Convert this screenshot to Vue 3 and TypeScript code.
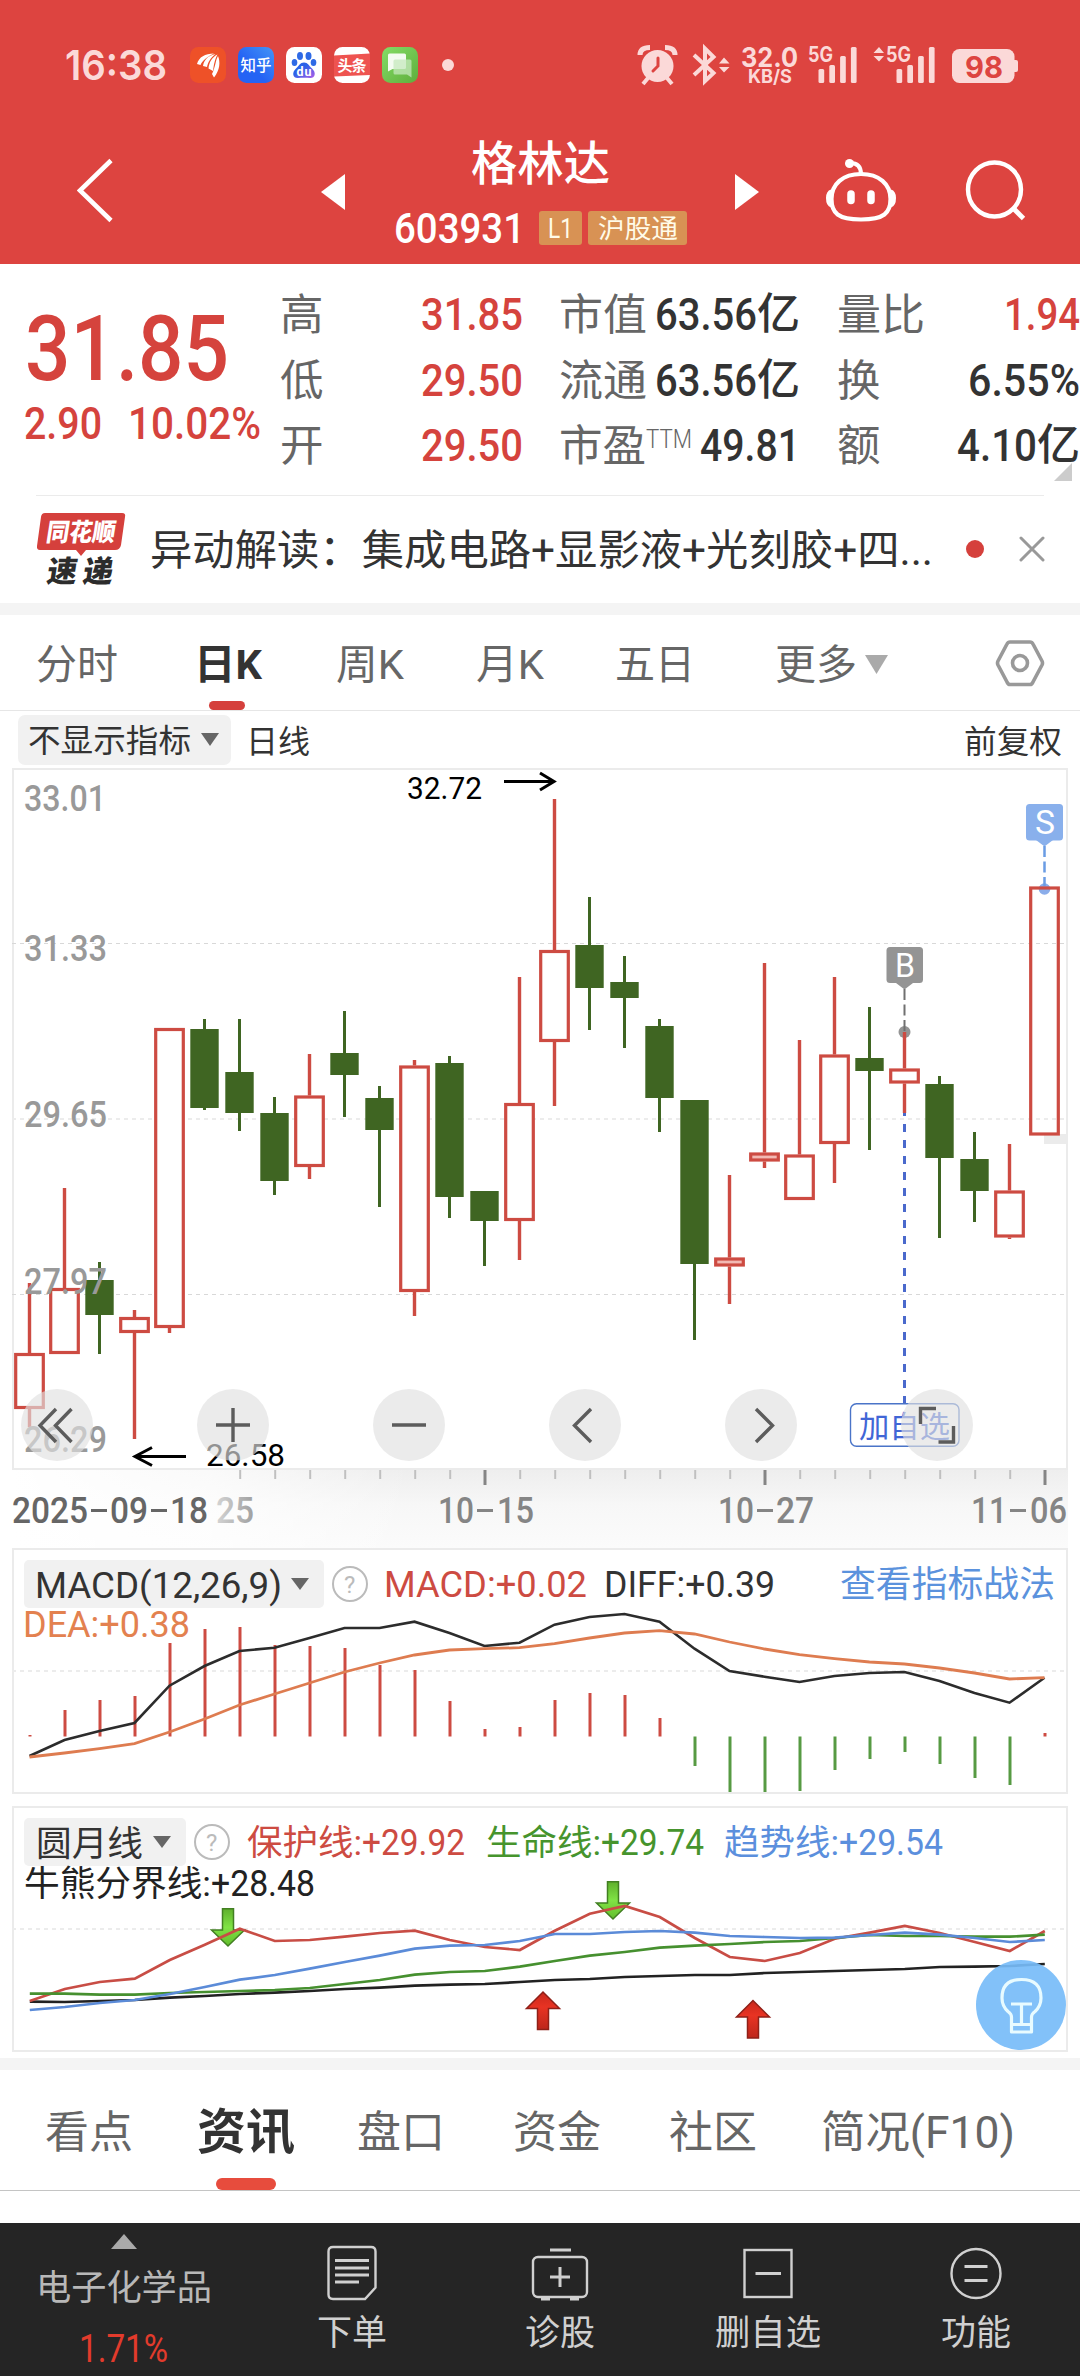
<script setup lang="ts">
import { h, type FunctionalComponent } from 'vue'

interface FitProps { t: string; w: number; s: number; b?: number }

// One line of text set to an exact advance width; colour is inherited.
const Fit: FunctionalComponent<FitProps> = (p) =>
  h('svg', { width: p.w, height: p.s, style: 'display:block;overflow:visible;flex:none' }, [
    h('text', {
      x: 0, y: p.s * 0.865, 'font-size': p.s, 'font-weight': p.b ?? 400,
      textLength: p.w, lengthAdjust: 'spacingAndGlyphs', fill: 'currentColor',
    }, p.t),
  ])
Fit.props = ['t', 'w', 's', 'b']

const RED = '#cd4b42'
const GREEN = '#3f6522'

interface Candle { up: boolean; hi: number; top: number; bot: number; lo: number }
const raw: [number, number, number, number, number][] = [
  [1, 1283, 1353, 1409, 1427], [1, 1188, 1288, 1354, 1354], [0, 1262, 1280, 1315, 1354],
  [1, 1310, 1317, 1333, 1439], [1, 1028, 1028, 1328, 1333], [0, 1019, 1029, 1108, 1110],
  [0, 1019, 1072, 1113, 1131], [0, 1097, 1113, 1181, 1195], [1, 1054, 1095.5, 1167, 1179],
  [0, 1011, 1053, 1075, 1117], [0, 1086, 1098, 1130, 1207], [1, 1060, 1065.5, 1292, 1316],
  [0, 1056, 1063, 1197, 1218], [0, 1191, 1191, 1221, 1266], [1, 977, 1103, 1221, 1260],
  [1, 799, 950, 1042, 1106], [0, 897, 945, 988, 1030], [0, 956, 982, 998, 1048],
  [0, 1019, 1026, 1098, 1132], [0, 1100, 1100, 1264, 1340], [1, 1175, 1257.5, 1266.5, 1304],
  [1, 963, 1152.5, 1161.5, 1168], [1, 1040, 1154.5, 1200, 1200], [1, 977, 1054.5, 1144, 1183],
  [0, 1007, 1058, 1071, 1150], [1, 1032, 1068.5, 1083.5, 1113], [0, 1076, 1084, 1158, 1238],
  [0, 1132, 1159, 1191, 1222], [1, 1144, 1190.5, 1237.5, 1239], [1, 886.5, 886.5, 1135.5, 1135.5],
]
const candles: Candle[] = raw.map(([u, hi, top, bot, lo]) => ({ up: u === 1, hi, top, bot, lo }))
const cx = (i: number): number => 29.5 + i * 35

const points = (ys: number[], dx = 0): string => ys.map((y, i) => `${cx(i) + dx},${y}`).join(' ')

const bars = [1735, 1710, 1700, 1696, 1643, 1629, 1627, 1645, 1646, 1648, 1665, 1670, 1701, 1729, 1727, 1700, 1693, 1695, 1718,
  1766, 1792, 1792, 1791, 1770, 1759, 1752, 1764, 1778, 1785, 1733]
const diff = [1756, 1740, 1731, 1723, 1685.7, 1666, 1651, 1647.7, 1638, 1628, 1628, 1621.7, 1633, 1646, 1642.7, 1624.7, 1617, 1614,
  1621.7, 1648.7, 1671, 1676.7, 1682, 1676, 1673, 1672, 1681, 1693, 1702.7, 1677.7]
const dea = [1757, 1753, 1748.7, 1743.7, 1732, 1719, 1705, 1694, 1683, 1672, 1663, 1655, 1650, 1648.7, 1647.7, 1643.7, 1638, 1633,
  1630.7, 1634, 1642, 1649, 1654.7, 1658.7, 1662, 1664, 1668, 1673, 1679, 1677.7]
const protect = [2001, 1989, 1982, 1978.7, 1960, 1944.7, 1928.7, 1941, 1940, 1936.7, 1933, 1930.7, 1940, 1947, 1950, 1930.7, 1913.7,
  1906, 1917, 1938, 1957, 1961, 1953, 1938.7, 1932.7, 1926, 1933, 1942, 1951, 1931]
const trend = [2010, 2007, 2003, 2000, 1994, 1987, 1979.7, 1975, 1968.7, 1962, 1955.7, 1948.7, 1945.7, 1945, 1941, 1934, 1934, 1932,
  1931, 1932.7, 1936, 1937, 1938, 1937.7, 1935, 1932.7, 1934.7, 1938, 1942, 1940]
const life = [1993.7, 1993.7, 1994.7, 1994.7, 1993, 1992, 1991, 1990, 1988, 1984, 1980, 1974.7, 1972, 1971, 1966.7, 1961, 1955.7,
  1952, 1947.7, 1945.7, 1944, 1942, 1941, 1938, 1935, 1936, 1936, 1936.7, 1936.7, 1934.7]
const divide = [2001.7, 2002, 2001, 2000, 1997.7, 1996, 1994, 1992.7, 1991, 1989, 1987.7, 1985.7, 1984.7, 1984, 1982, 1980, 1979,
  1977, 1976, 1975, 1975, 1973, 1972, 1971, 1970, 1969, 1967, 1966.7, 1966, 1964]

interface Label { t: string; x: number; y: number; w: number; s: number; c: string; b?: number }
const axis: Label[] = [
  { t: '33.01', x: 24, y: 811, w: 82, s: 36, c: '#999', b: 500 },
  { t: '31.33', x: 24, y: 961, w: 83, s: 36, c: '#999', b: 500 },
  { t: '29.65', x: 24, y: 1127, w: 83, s: 36, c: '#999', b: 500 },
  { t: '27.97', x: 24, y: 1294, w: 83, s: 36, c: '#999', b: 500 },
  { t: '26.29', x: 24, y: 1452, w: 83, s: 36, c: '#999', b: 500 },
  { t: '32.72', x: 407, y: 799, w: 75, s: 30.5, c: '#000' },
  { t: '26.58', x: 206, y: 1466, w: 79, s: 30.5, c: '#000' },
]
const dates: Label[] = [
  { t: '2025', x: 12, y: 1523, w: 76, s: 36, c: '#666', b: 500 },
  { t: '09', x: 110, y: 1523, w: 38, s: 36, c: '#666', b: 500 },
  { t: '18', x: 170, y: 1523, w: 38, s: 36, c: '#666', b: 500 },
  { t: '25', x: 216, y: 1523, w: 38, s: 36, c: 'url(#fade25)', b: 500 },
  { t: '10', x: 438, y: 1523, w: 36, s: 36, c: '#858585', b: 500 },
  { t: '15', x: 497, y: 1523, w: 37, s: 36, c: '#858585', b: 500 },
  { t: '10', x: 718, y: 1523, w: 36, s: 36, c: '#858585', b: 500 },
  { t: '27', x: 776, y: 1523, w: 38, s: 36, c: '#858585', b: 500 },
  { t: '11', x: 971, y: 1523, w: 36, s: 36, c: '#858585', b: 500 },
  { t: '06', x: 1030, y: 1523, w: 37, s: 36, c: '#858585', b: 500 },
]
const dashes: [number, string][] = [[91, '#666'], [151, '#666'], [477, '#858585'], [757, '#858585'], [1010, '#858585']]
const macdText: Label[] = [
  { t: 'MACD(12,26,9)', x: 35, y: 1598, w: 247, s: 36, c: '#333' },
  { t: 'MACD:+0.02', x: 384, y: 1597, w: 203, s: 36, c: RED },
  { t: 'DIFF:+0.39', x: 604, y: 1597, w: 171, s: 36, c: '#333' },
  { t: '查看指标战法', x: 840, y: 1597, w: 215, s: 36, c: '#5b92dd' },
  { t: 'DEA:+0.38', x: 23, y: 1637, w: 167, s: 36, c: '#e3814f' },
]
const moonText: Label[] = [
  { t: '圆月线', x: 36, y: 1856, w: 107, s: 35.5, c: '#333' },
  { t: '保护线:', x: 247, y: 1855, w: 115, s: 35.5, c: RED },
  { t: '+29.92', x: 362, y: 1855, w: 103, s: 36, c: RED },
  { t: '生命线:', x: 486, y: 1855, w: 115, s: 35.5, c: '#46942d' },
  { t: '+29.74', x: 601, y: 1855, w: 103, s: 36, c: '#46942d' },
  { t: '趋势线:', x: 724, y: 1855, w: 115, s: 35.5, c: '#5b8fdd' },
  { t: '+29.54', x: 839, y: 1855, w: 104, s: 36, c: '#5b8fdd' },
  { t: '牛熊分界线:', x: 24, y: 1896, w: 187, s: 35.5, c: '#222' },
  { t: '+28.48', x: 211, y: 1896, w: 104, s: 36, c: '#222' },
]
const signalTops = [69, 65, 56, 47]
</script>

<template>
  <div class="app">
    <header class="top">
      <div class="status">
        <Fit class="clock" t="16:38" :w="102" :s="41" :b="600" />
        <div class="apps">
          <svg width="36" height="36" viewBox="0 0 36 36">
            <rect width="36" height="36" rx="8.5" fill="#ee5128" />
            <path d="M7 17C9 10 15 6.500 24 6.500C17 9.500 12 14 10.500 18ZM13 19C14 13 18 8.500 25.500 7C20.500 11 18 15 17 20ZM18.500 21.500C19 15.500 22 10 27.500 7.500C24.500 13 24 17.500 23 24ZM22 27C25.500 20 25.500 13 28 9C30.500 15 30 23 24 30.500Z" fill="#fff" />
          </svg>
          <svg width="36" height="36" viewBox="0 0 36 36">
            <defs><linearGradient id="zh" x1="0" y1="1" x2="1" y2="0"><stop offset=".4" stop-color="#2563f4" /><stop offset="1" stop-color="#4395f6" /></linearGradient></defs>
            <rect width="36" height="36" rx="8.500" fill="url(#zh)" />
            <text x="2.500" y="23.500" font-size="15.500" textLength="31" fill="#fff" font-weight="500">知乎</text>
          </svg>
          <svg width="36" height="36" viewBox="0 0 36 36">
            <defs><linearGradient id="du" x1="0" y1="0" x2="1" y2="1"><stop offset=".4" stop-color="#2b62e8" /><stop offset="1" stop-color="#b05ee8" /></linearGradient></defs>
            <rect width="36" height="36" rx="8.500" fill="#fff" />
            <g fill="#2e6ae6">
              <ellipse cx="14" cy="9" rx="3" ry="4" /><ellipse cx="22.500" cy="9" rx="3" ry="4" />
              <ellipse cx="8.500" cy="15.500" rx="2.800" ry="3.600" /><ellipse cx="27.500" cy="15.500" rx="2.800" ry="3.600" />
            </g>
            <path d="M18 15.500C22 15.500 23 19 26 21.500C31 26 28.500 31.500 24 31C20 30.500 16 30.500 12 31C7.500 31.500 5 26 10 21.500C13 19 14 15.500 18 15.500Z" fill="url(#du)" />
            <text x="10.500" y="29" font-size="12.500" textLength="15" font-weight="700" fill="#fff">du</text>
          </svg>
          <svg width="36" height="36" viewBox="0 0 36 36">
            <rect width="36" height="36" rx="8.500" fill="#fff" />
            <path d="M0 8.500L36 6.500V28L0 29.500Z" fill="#ee5350" />
            <text x="3.500" y="24" font-size="15" textLength="29" font-weight="700" fill="#fff">头条</text>
          </svg>
          <svg width="36" height="36" viewBox="0 0 36 36">
            <defs><linearGradient id="msg" x1="0" y1="0" x2="1" y2="1"><stop offset="0" stop-color="#84dd66" /><stop offset="1" stop-color="#5fae3c" /></linearGradient></defs>
            <rect width="36" height="36" rx="8.500" fill="url(#msg)" />
            <path d="M7.500 6.500H22.500Q24 6.500 24 8V20.500Q24 22 22.500 22H10.500L6 24.500V8Q6 6.500 7.500 6.500Z" fill="#f3fbf0" />
            <path d="M13 12.500H28Q29.500 12.500 29.500 14V30.500L25 27.500H13Q11.500 27.500 11.500 26V14Q11.500 12.500 13 12.500Z" fill="#c6e8bd" opacity=".75" />
          </svg>
        </div>
        <i class="more-dot"></i>
        <svg class="sys" width="390" height="44" viewBox="635 43 390 44" fill="#fbd9d8">
          <circle cx="657.500" cy="66" r="16" />
          <path d="M640 55Q640 47.500 650 47.500M675 55Q675 47.500 665 47.500" stroke="#fbd9d8" stroke-width="5" fill="none" />
          <path d="M648 78L643 84M667 78L672 84" stroke="#fbd9d8" stroke-width="4" />
          <path d="M658 58V66L653 71" stroke="#dd4440" stroke-width="3" fill="none" stroke-linecap="round" />
          <path d="M694 55L713.500 73L705 81V48.500L713.500 57L694 75" stroke="#fbd9d8" stroke-width="4" fill="none" />
          <path d="M719 63.500L724 57.500L729.500 63.500ZM719 67L724 72.500L729.500 67Z" />
          <text x="741" y="66.500" font-size="27.500" font-weight="700" textLength="57" lengthAdjust="spacingAndGlyphs">32.0</text>
          <text x="748" y="83" font-size="18.500" font-weight="700" textLength="44" lengthAdjust="spacingAndGlyphs">KB/S</text>
          <text x="808" y="62" font-size="21" font-weight="700" textLength="25" lengthAdjust="spacingAndGlyphs">5G</text>
          <text x="886" y="62" font-size="21" font-weight="700" textLength="25" lengthAdjust="spacingAndGlyphs">5G</text>
          <path d="M873.500 53L879 47L884 53ZM873.500 56L879 61.500L884 56Z" />
          <template v-for="(t, i) in signalTops" :key="i">
            <rect :x="818.500 + i * 10.800" :y="t" width="5.700" :height="83 - t" rx="1.500" />
            <rect :x="896.500 + i * 10.800" :y="t" width="5.700" :height="83 - t" rx="1.500" />
          </template>
          <rect x="952" y="49" width="62.500" height="34" rx="7.500" />
          <path d="M1014 60H1016Q1018 60 1018 62V70Q1018 72 1016 72H1014Z" />
          <text x="965" y="77.500" font-size="30" font-weight="700" textLength="38" lengthAdjust="spacingAndGlyphs" fill="#dd4440">98</text>
        </svg>
      </div>
      <nav class="nav">
        <svg class="back" width="36" height="66" viewBox="77 156 36 66"><path d="M111 159.500L80 189.500L111 219.500" stroke="#fff" stroke-width="4.600" fill="none" /></svg>
        <svg class="prev" width="24" height="36"><path d="M0 18L24 0V36Z" fill="#fff" /></svg>
        <div class="title">
          <Fit t="格林达" :w="139" :s="46.5" :b="500" />
          <div class="code">
            <Fit t="603931" :w="131" :s="42" :b="500" />
            <span class="tag l1"><Fit t="L1" :w="25" :s="28" /></span>
            <span class="tag hgt"><Fit t="沪股通" :w="80" :s="26.5" /></span>
          </div>
        </div>
        <svg class="next" width="24" height="36"><path d="M24 18L0 0V36Z" fill="#fff" /></svg>
        <svg class="robot" width="72" height="66" viewBox="825 157 72 66" fill="none" stroke="#fff">
          <path d="M861 174C879 174 890.500 184 890.500 199C890.500 213 884 219.500 861 219.500C838 219.500 831.500 213 831.500 199C831.500 184 843 174 861 174Z" stroke-width="4.200" />
          <path d="M831 189.500Q826 191 826 198Q826 206 831 207.500ZM891 189.500Q896 191 896 198Q896 206 891 207.500Z" fill="#fff" stroke="none" />
          <path d="M861 174Q861 163 850 163" stroke-width="4" /><circle cx="849.500" cy="163.500" r="4.500" fill="#fff" stroke="none" />
          <path d="M851 194V200.500M871 194V200.500" stroke-width="7.500" stroke-linecap="round" />
        </svg>
        <svg class="search" width="62" height="62" viewBox="965 160 62 62" fill="none" stroke="#fff" stroke-width="4.400"><ellipse cx="994.500" cy="190.500" rx="26.500" ry="27" /><path d="M1013 209L1023.500 219.500" stroke-width="4.800" /></svg>
      </nav>
    </header>

    <section class="quote">
      <div class="price">
        <Fit class="big" t="31.85" :w="204" :s="90" :b="500" />
        <div class="chg"><Fit t="2.90" :w="78" :s="44.5" :b="500" /><Fit t="10.02%" :w="133" :s="44.5" :b="500" /></div>
      </div>
      <div class="stats g1">
        <div><Fit t="高" :w="43.5" :s="43.5" /><Fit class="red" t="31.85" :w="102" :s="45" :b="500" /></div>
        <div><Fit t="低" :w="43.5" :s="43.5" /><Fit class="red" t="29.50" :w="102" :s="45" :b="500" /></div>
        <div><Fit t="开" :w="43.5" :s="43.5" /><Fit class="red" t="29.50" :w="102" :s="45" :b="500" /></div>
      </div>
      <div class="stats g2">
        <div><Fit t="市值" :w="88" :s="43.5" /><span class="dark"><Fit t="63.56" :w="102" :s="45" :b="500" /><Fit t="亿" :w="43" :s="43" :b="500" /></span></div>
        <div><Fit t="流通" :w="88" :s="43.5" /><span class="dark"><Fit t="63.56" :w="102" :s="45" :b="500" /><Fit t="亿" :w="43" :s="43" :b="500" /></span></div>
        <div><span class="ttm"><Fit t="市盈" :w="87" :s="43.5" /><Fit class="sup" t="TTM" :w="46" :s="25" :b="300" /></span><span class="dark"><Fit t="49.81" :w="100" :s="45" :b="500" /></span></div>
      </div>
      <div class="stats g3">
        <div><Fit t="量比" :w="88" :s="43.5" /><Fit class="red" t="1.94" :w="76" :s="45" :b="500" /></div>
        <div><Fit t="换" :w="43.5" :s="43.5" /><Fit class="dark" t="6.55%" :w="112" :s="45" :b="500" /></div>
        <div><Fit t="额" :w="43.5" :s="43.5" /><span class="dark"><Fit t="4.10" :w="80" :s="45" :b="500" /><Fit t="亿" :w="43" :s="43" :b="500" /></span></div>
      </div>
      <svg class="corner" width="18" height="18"><path d="M18 0V18H0Z" fill="#ccc" /></svg>
    </section>

    <section class="news">
      <svg width="90" height="74" viewBox="36 512 90 74">
        <path d="M45 513H122Q126 513 125 517L121 545Q120 550 115 550H86L81 556L76 550H40Q36.500 550 37 546L41 517Q41.500 513 45 513Z" fill="#d5403c" />
        <g transform="skewX(-9)"><text x="131" y="541" font-size="25" font-weight="900" textLength="69" lengthAdjust="spacingAndGlyphs" fill="#fff">同花顺</text>
          <text x="138" y="582" font-size="30" font-weight="900" textLength="66" lengthAdjust="spacing" fill="#2c2c2c">速递</text></g>
      </svg>
      <Fit class="headline" t="异动解读：集成电路+显影液+光刻胶+四..." :w="783" :s="42" />
      <i class="unread"></i>
      <svg class="close" width="26" height="26"><path d="M2 2L24 24M24 2L2 24" stroke="#999" stroke-width="3" stroke-linecap="round" /></svg>
    </section>
    <div class="band"></div>

    <div class="periods">
      <Fit t="分时" :w="82" :s="41" />
      <span class="on"><Fit t="日K" :w="68" :s="41" :b="700" /></span>
      <Fit t="周K" :w="68" :s="41" />
      <Fit t="月K" :w="68" :s="41" />
      <Fit t="五日" :w="80" :s="41" />
      <span class="more"><Fit t="更多" :w="82" :s="41" /><svg width="23" height="19"><path d="M0 0H23L11.500 19Z" fill="#aaa" /></svg></span>
      <svg class="gear" width="50" height="48" viewBox="995 639 50 48" fill="none" stroke="#999" stroke-width="3.600"><path d="M1010 642H1030Q1032 642 1033 644L1042 661Q1043 663 1042 665L1033 682Q1032 684.500 1030 684.500H1010Q1008 684.500 1007 682L998 665Q997 663 998 661L1007 644Q1008 642 1010 642Z" /><circle cx="1020" cy="663" r="7.500" /></svg>
    </div>

    <div class="tools">
      <span class="pill"><Fit t="不显示指标" :w="163" :s="32" /><svg width="18" height="13"><path d="M0 0H18L9 13Z" fill="#666" /></svg></span>
      <Fit class="dayline" t="日线" :w="64" :s="32" />
      <Fit class="adjust" t="前复权" :w="98" :s="32" />
    </div>

    <svg class="panel" width="1080" height="780" viewBox="0 768 1080 780">
      <defs>
        <linearGradient id="shade" x1="0" y1="0" x2="0" y2="1"><stop offset="0" stop-color="#eeeeee" /><stop offset=".45" stop-color="#f7f7f7" /><stop offset="1" stop-color="#fbfbfb" /></linearGradient>
        <linearGradient id="shadeLeft" x1="0" y1="0" x2="1" y2="0"><stop offset="0" stop-color="#fff" /><stop offset=".5" stop-color="#fff" stop-opacity=".7" /><stop offset="1" stop-color="#fff" stop-opacity="0" /></linearGradient>
        <linearGradient id="fade25" x1="0" y1="0" x2="1" y2="0"><stop offset="0" stop-color="#d4d4d4" /><stop offset="1" stop-color="#a0a0a0" /></linearGradient>
      </defs>
      <rect x="12" y="1470" width="1056" height="78" fill="url(#shade)" />
      <rect x="12" y="1470" width="400" height="78" fill="url(#shadeLeft)" />
      <rect x="13" y="769" width="1054" height="700" fill="none" stroke="#ebebeb" stroke-width="2" />
      <path d="M12 943.500H1066M12 1294.500H1066" stroke="#d8d8d8" stroke-width="1" stroke-dasharray="4 4" />
      <path d="M12 1119H1066" stroke="#ececec" stroke-width="2" stroke-dasharray="4 4" />
      <rect x="1044" y="1134" width="24" height="10" fill="#ebebeb" />
      <path d="M904.500 1108V1404" stroke="#4a69cc" stroke-width="3" stroke-dasharray="8 8" />
      <circle cx="904.500" cy="1032" r="6" fill="#949494" />
      <circle cx="1044.500" cy="889" r="5.800" fill="#8badea" />
      <g v-for="(c, i) in candles" :key="i">
        <template v-if="c.up">
          <path :d="`M${cx(i)} ${c.hi}V${c.top}M${cx(i)} ${c.bot}V${c.lo}`" :stroke="RED" stroke-width="3.400" />
          <rect :x="cx(i) - 13.800" :y="c.top + 1.500" width="27.600" :height="c.bot - c.top - 3" :fill="c.bot - c.top < 10 ? '#f2b9b3' : i === 29 || i === 25 ? 'none' : '#fff'" :stroke="RED" stroke-width="3.200" />
        </template>
        <template v-else>
          <path :d="`M${cx(i)} ${c.hi}V${c.lo}`" :stroke="GREEN" stroke-width="3" />
          <rect :x="cx(i) - 14.200" :y="c.top" width="28.400" :height="c.bot - c.top" :fill="GREEN" />
        </template>
      </g>
      <path d="M504 781.500H553M540 773L554 781.500L540 790" stroke="#000" stroke-width="3" fill="none" />
      <path d="M186 1456.500H136M152 1447.500L135 1456.500L152 1465.500" stroke="#000" stroke-width="3" fill="none" />
      <g fill="#949494"><rect x="886.500" y="947" width="36.500" height="36" rx="3.500" /><path d="M896 983H913L904.500 989.500Z" /></g>
      <path d="M904.500 989V1032" stroke="#707070" stroke-width="2" stroke-dasharray="11 4.500" />
      <text x="895" y="977" font-size="33" textLength="20" lengthAdjust="spacingAndGlyphs" fill="#fff">B</text>
      <g fill="#89b0ec"><rect x="1026" y="804" width="37" height="36.500" rx="3.500" /><path d="M1036 840H1053L1044.500 846.500Z" /></g>
      <path d="M1044.500 846V886" stroke="#6a9ce4" stroke-width="2.500" stroke-dasharray="11 4.500" />
      <text x="1035" y="834" font-size="33" textLength="20" lengthAdjust="spacingAndGlyphs" fill="#fff">S</text>
      <text v-for="(l, i) in axis" :key="'a' + i" :x="l.x" :y="l.y" :font-size="l.s" :font-weight="l.b" :textLength="l.w" lengthAdjust="spacingAndGlyphs" :fill="l.c">{{ l.t }}</text>
      <rect x="850.500" y="1403.700" width="108.500" height="42.600" rx="6" fill="#fff" stroke="#4a74c8" stroke-width="1.400" />
      <text x="859" y="1437" font-size="30" textLength="91" lengthAdjust="spacingAndGlyphs" fill="#4166d6">加自选</text>
      <circle v-for="x in [57, 233, 409, 585, 761, 937]" :key="x" :cx="x" cy="1425" r="36" fill="#e0e0e0" fill-opacity=".65" />
      <g stroke="#5c5c5c" stroke-width="3.400" fill="none">
        <path d="M56 1409L40 1425.500L56 1442M71.500 1409L55.500 1425.500L71.500 1442" />
        <path d="M216 1425H250M233 1408V1442M392 1425H426" />
        <path d="M591 1409L574.500 1425.500L591 1442M756 1409L772.500 1425.500L756 1442" />
        <path d="M920.500 1424V1408.500H936M953.500 1426V1442H938.500" />
      </g>
      <path v-for="i in 23" :key="'t' + i" :d="`M${cx(i + 5) + .7} 1470V1479`" :stroke="i === 8 || i === 16 ? 'none' : '#c0c0c0'" stroke-width="2" />
      <path d="M485 1470V1485M765 1470V1485M1045 1470V1485" stroke="#858585" stroke-width="3" />
      <text v-for="(l, i) in dates" :key="'d' + i" :x="l.x" :y="l.y" :font-size="l.s" :font-weight="l.b" :textLength="l.w" lengthAdjust="spacingAndGlyphs" :fill="l.c">{{ l.t }}</text>
      <path v-for="d in dashes" :key="d[0]" :d="`M${d[0]} 1510.500h16`" :stroke="d[1]" stroke-width="3" />
    </svg>

    <svg class="panel" width="1080" height="258" viewBox="0 1548 1080 258">
      <rect x="13" y="1549" width="1054" height="244" fill="none" stroke="#ebebeb" stroke-width="2" />
      <path d="M12 1671H1066" stroke="#ececec" stroke-width="2" stroke-dasharray="4 4" />
      <rect x="24" y="1560" width="300" height="48" rx="5" fill="#f1f1f1" />
      <path d="M291 1578H309L300 1590Z" fill="#666" />
      <circle cx="350" cy="1584" r="17" fill="none" stroke="#bbb" stroke-width="2" />
      <text x="344" y="1592.500" font-size="24" fill="#bbb">?</text>
      <path v-for="(y, i) in bars" :key="i" :d="`M${cx(i) + .5} 1736.500V${y}`" :stroke="y > 1736 ? '#579a43' : RED" stroke-width="3" />
      <polyline :points="points(diff)" stroke="#2c2c2c" stroke-width="2.600" fill="none" />
      <polyline :points="points(dea)" stroke="#de7c50" stroke-width="2.800" fill="none" />
      <text v-for="(l, i) in macdText" :key="'m' + i" :x="l.x" :y="l.y" :font-size="l.s" :textLength="l.w" lengthAdjust="spacingAndGlyphs" :fill="l.c">{{ l.t }}</text>
    </svg>

    <svg class="panel" width="1080" height="252" viewBox="0 1806 1080 252">
      <defs>
        <linearGradient id="dn" x1="0" y1="0" x2="0" y2="1"><stop offset="0" stop-color="#5fb02c" /><stop offset=".5" stop-color="#80e345" /><stop offset="1" stop-color="#62bd2c" /></linearGradient>
        <linearGradient id="up" x1="0" y1="0" x2="0" y2="1"><stop offset="0" stop-color="#c9281c" /><stop offset=".4" stop-color="#e83323" /><stop offset="1" stop-color="#bd261b" /></linearGradient>
      </defs>
      <rect x="13" y="1807" width="1054" height="244" fill="none" stroke="#ebebeb" stroke-width="2" />
      <path d="M12 1929H1066" stroke="#ececec" stroke-width="2" stroke-dasharray="4 4" />
      <rect x="24" y="1818" width="162" height="48" rx="5" fill="#f1f1f1" />
      <path d="M153 1836H171L162 1848Z" fill="#666" />
      <circle cx="212" cy="1842" r="17" fill="none" stroke="#bbb" stroke-width="2" />
      <text x="206" y="1850.500" font-size="24" fill="#bbb">?</text>
      <path v-for="p in [[228, 1908], [613, 1881]]" :key="p[0]" :transform="`translate(${p[0]} ${p[1]})`" d="M-5.500 .8H5.500V22H16.500L0 38L-16.500 22H-5.500Z" fill="url(#dn)" stroke="#427f22" stroke-width="1.500" />
      <path v-for="p in [[543, 1991], [753, 1999.5]]" :key="p[0]" :transform="`translate(${p[0]} ${p[1]})`" d="M-5.500 38.500H5.500V17.500H16.500L0 1L-16.500 17.500H-5.500Z" fill="url(#up)" stroke="#8f2018" stroke-width="1.500" />
      <g fill="none" stroke-width="2.700">
        <polyline :points="points(divide, .3)" stroke="#222" />
        <polyline :points="points(protect, .3)" stroke="#c84d45" />
        <polyline :points="points(life, .3)" stroke="#46902f" />
        <polyline :points="points(trend, .3)" stroke="#5b8bd8" />
      </g>
      <text v-for="(l, i) in moonText" :key="'n' + i" :x="l.x" :y="l.y" :font-size="l.s" :font-weight="l.b" :textLength="l.w" lengthAdjust="spacingAndGlyphs" :fill="l.c">{{ l.t }}</text>
      <circle cx="1021" cy="2005" r="45" fill="#77bcf8" fill-opacity=".92" />
      <g fill="none" stroke="#e8fbff" stroke-width="3.200" stroke-linejoin="round">
        <path d="M1011.500 2017Q1011.500 2014 1008 2011.500Q1002 2006 1002 1998Q1002 1979.500 1021.500 1979.500Q1041 1979.500 1041 1998Q1041 2006 1035 2011.500Q1031.500 2014 1031.500 2017V2032H1011.500Z" />
        <path d="M1011 2004H1032M1021.500 2004V2024M1011.500 2024.500H1031.500" />
      </g>
    </svg>
    <div class="band"></div>

    <div class="sections">
      <Fit t="看点" :w="88" :s="44" />
      <span class="on"><Fit t="资讯" :w="98" :s="49" :b="700" /></span>
      <Fit t="盘口" :w="88" :s="44" />
      <Fit t="资金" :w="88" :s="44" />
      <Fit t="社区" :w="88" :s="44" />
      <Fit t="简况(F10)" :w="194" :s="44" />
    </div>
    <div class="spacer"></div>

    <footer class="bar">
      <div class="sector">
        <svg width="26" height="15"><path d="M13 0L26 15H0Z" fill="#aaa" /></svg>
        <Fit class="name" t="电子化学品" :w="176" :s="35" />
        <Fit class="pct" t="1.71%" :w="89" :s="38" />
      </div>
      <div class="act">
        <svg width="60" height="56" viewBox="0 0 60 56"><path d="M11 2H49Q53.500 2 53.500 6.500V42.500L43 54H11Q6.500 54 6.500 49.500V6.500Q6.500 2 11 2Z" /><path d="M13 15.500H47M13 23H47M13 30H47M13 37H37" stroke-width="3" /></svg>
        <Fit t="下单" :w="70" :s="35" />
      </div>
      <div class="act">
        <svg width="60" height="56" viewBox="0 0 60 56"><rect x="3" y="12" width="54" height="40" rx="5" /><path d="M20 5H41" stroke-width="3" /><path d="M30 22V42M20 32H40M11 54H20M40 54H49" stroke-width="3" /></svg>
        <Fit t="诊股" :w="70" :s="35" />
      </div>
      <div class="act">
        <svg width="60" height="56" viewBox="0 0 60 56"><rect x="6.500" y="5" width="47" height="47" /><path d="M17.500 28.500H43" stroke-width="3" /></svg>
        <Fit t="删自选" :w="106" :s="35" />
      </div>
      <div class="act">
        <svg width="60" height="56" viewBox="0 0 60 56"><circle cx="30" cy="28.500" r="24.500" /><path d="M18.500 21.500H41.500M18.500 35.500H41.500" stroke-width="3" /></svg>
        <Fit t="功能" :w="70" :s="35" />
      </div>
    </footer>
  </div>
</template>

<style>
body { margin: 0; background: #fff; }
</style>

<style scoped>
.app { width: 1080px; height: 2376px; overflow: hidden; background: #fff; color: #666; font-family: Roboto, "Noto Sans CJK SC", sans-serif; }
svg { display: block; flex: none; }
.top { height: 264px; background: #dd4440; color: #fff; }
.status { height: 130px; display: flex; align-items: center; color: #fbd9d8; }
.clock { margin-left: 65px; font-family: Inter, sans-serif; }
.apps { display: flex; gap: 12px; margin-left: 23px; }
.more-dot { width: 12px; height: 12px; border-radius: 50%; background: #fbd9d8; margin-left: 24px; }
.sys { margin-left: 181px; font-family: Inter, sans-serif; overflow: visible; }
.nav { height: 120px; display: flex; align-items: center; }
.back { margin-left: 77px; }
.prev { margin: 4px 0 0 208px; }
.title { width: 293px; margin: 5px 48px 0 49px; display: flex; flex-direction: column; align-items: center; gap: 25px; }
.code { display: flex; align-items: center; height: 34px; }
.tag { height: 34px; border-radius: 3px; background: #d89254; display: flex; align-items: center; justify-content: center; color: #fffbe8; }
.l1 { width: 43px; margin-left: 14px; }
.hgt { width: 99px; margin-left: 6px; }
.next { margin-top: 4px; }
.robot { margin-left: 66px; }
.search { margin-left: 68px; }

.quote { height: 231px; display: flex; position: relative; }
.red { color: #d5433d; }
.dark { color: #333; display: flex; align-items: center; }
.price { width: 280px; color: #d5433d; }
.big { margin: 38px 0 0 25px; }
.chg { display: flex; margin: 8px 0 0 24px; }
.chg svg + svg { margin-left: 26px; }
.stats { padding-top: 17px; }
.stats > div { height: 65.5px; display: flex; align-items: center; justify-content: space-between; }
.g1 { width: 243px; }
.g2 { width: 241px; margin-left: 36px; }
.g3 { width: 243px; margin-left: 37px; }
.ttm { display: flex; align-items: flex-start; }
.sup { margin-top: 3px; }
.corner { position: absolute; left: 1054px; top: 199px; }

.news { height: 108px; display: flex; align-items: center; color: #333; position: relative; }
.news::before { content: ""; position: absolute; left: 36px; right: 36px; top: 0; height: 1px; background: #ebebeb; }
.news > svg:first-child { margin-left: 36px; }
.headline { margin: 2px 0 0 24px; }
.unread { width: 18px; height: 18px; border-radius: 50%; background: #d5403c; margin-left: 33px; }
.close { margin-left: 35px; }
.band { height: 12px; background: #f4f4f4; position: relative; z-index: 1; }

.periods { height: 96px; box-sizing: border-box; border-bottom: 1px solid #e6e6e6; padding: 4px 0 0 36px; display: grid; grid-template-columns: 158px 142px 140px 139px 160px 220px 50px; align-items: center; }
.gear { margin-top: -4px; }
.on { position: relative; color: #333; align-self: stretch; display: flex; align-items: center; justify-self: start; }
.on::after { content: ""; position: absolute; left: 15px; bottom: 0; width: 36px; height: 9px; border-radius: 5px; background: #d5403c; }
.more { display: flex; align-items: center; gap: 8px; }

.tools { height: 57px; display: flex; align-items: center; color: #333; }
.pill { margin-left: 18px; width: 213px; height: 50px; border-radius: 7px; background: #f1f1f1; box-sizing: border-box; padding-left: 10px; display: flex; align-items: center; gap: 10px; }
.dayline { margin: 2px 0 0 15px; }
.adjust { margin: 2px 18px 0 auto; }

.sections { height: 121px; box-sizing: border-box; border-bottom: 1px solid #c4c4c4; padding: 3px 0 0 45px; display: grid; grid-template-columns: 152px 160px 156px 156px 152px 1fr; align-items: center; }
.sections .on::after { left: 19px; width: 60px; height: 12px; border-radius: 7px; background: #e74c3d; }
.spacer { height: 32px; }
.bar { height: 153px; background: #252525; display: grid; grid-template-columns: 247.5px repeat(4, 208px); }
.sector, .act { display: flex; flex-direction: column; align-items: center; }
.sector > svg:first-child { margin-top: 11px; }
.name { margin-top: 21px; color: #b8b8b8; }
.pct { margin-top: 24px; color: #e23b2c; }
.act { color: #d0d0d0; }
.act > svg:first-child { margin: 22px 0 14px; fill: none; stroke: #d0d0d0; stroke-width: 2.4px; }
</style>
